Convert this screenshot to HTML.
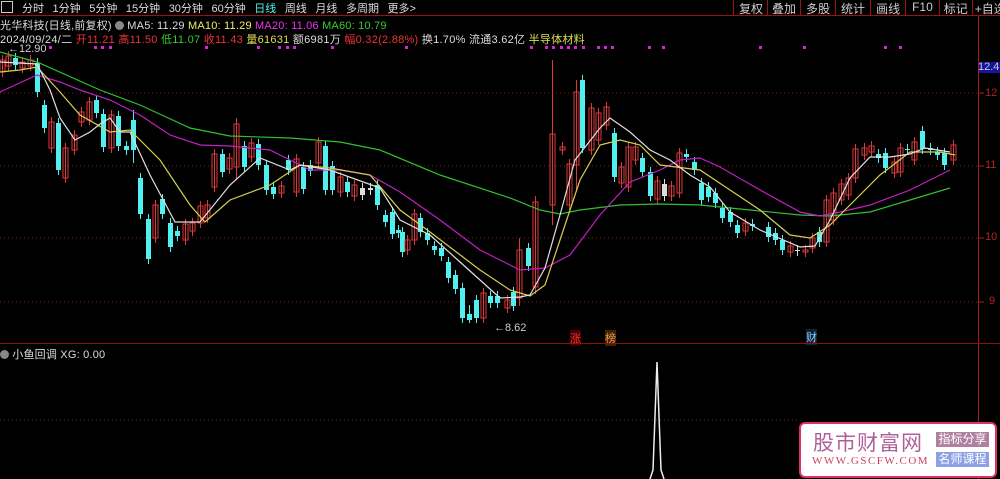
<!DOCTYPE html>
<html><head><meta charset="utf-8"><style>
body{margin:0;width:1000px;height:479px;background:#000;overflow:hidden;font-family:"Liberation Sans","Noto Sans CJK SC",sans-serif;position:relative}
.t{position:absolute;white-space:nowrap;font-size:11px}
</style></head><body>
<div class="t" style="left:0;top:0;width:1000px;height:15px;border-bottom:1px solid #a01010"></div>
<div class="t" style="left:1px;top:1px;width:10px;height:10px;border:1px solid #ccc;font-size:8px"></div>
<div class="t" style="left:22px;top:0px;color:#ddd;font-size:11px;word-spacing:5.5px">分时 1分钟 5分钟 15分钟 30分钟 60分钟 <span style="color:#5ee">日线</span> 周线 月线 多周期 更多&gt;</div>
<div class="t" style="left:733px;top:0;height:15px;width:267px;font-size:12px;color:#ccc;display:flex">
<span style="border-left:1px solid #a01010;padding:0 4px 0 5px">复权</span><span style="border-left:1px solid #a01010;padding:0 4px">叠加</span><span style="border-left:1px solid #a01010;padding:0 5px">多股</span><span style="border-left:1px solid #a01010;padding:0 5px">统计</span><span style="border-left:1px solid #a01010;padding:0 5px">画线</span><span style="border-left:1px solid #a01010;padding:0 6px">F10</span><span style="border-left:1px solid #a01010;padding:0 4px">标记</span><span style="border-left:1px solid #a01010;padding:0 2px">+自选</span></div>
<div class="t" style="left:0;top:17px;color:#ddd;font-size:11px;letter-spacing:0.2px">光华科技(日线,前复权) <span style="display:inline-block;width:9px;height:9px;border-radius:50%;background:#888;vertical-align:-1px"></span> MA5: 11.29 <span style="color:#ee6">MA10: 11.29</span> <span style="color:#e3e">MA20: 11.06</span> <span style="color:#3c3">MA60: 10.79</span></div>
<div class="t" style="left:0;top:31px;color:#ddd;font-size:11px;letter-spacing:0.27px">2024/09/24/二 <span style="color:#e33">开11.21 高11.50</span> <span style="color:#3c3">低11.07</span> <span style="color:#e33">收11.43</span> <span style="color:#dd5">量61631</span> 额6981万 <span style="color:#e33">幅0.32(2.88%)</span> 换1.70% 流通3.62亿 <span style="color:#dd5">半导体材料</span></div>
<div class="t" style="left:978px;top:62px;width:22px;height:11px;background:#1414a0;color:#ccc;font-size:11px;line-height:11px">12.4</div>
<div class="t" style="left:985px;top:87px;color:#b22;font-size:11px">12</div>
<div class="t" style="left:985px;top:159px;color:#b22;font-size:11px">11</div>
<div class="t" style="left:985px;top:231px;color:#b22;font-size:11px">10</div>
<div class="t" style="left:989px;top:295px;color:#b22;font-size:11px">9</div>
<div class="t" style="left:8px;top:43px;color:#ccc;font-size:11px">←12.90</div>
<div class="t" style="left:494px;top:322px;color:#ccc;font-size:11px">←8.62</div>
<div class="t" style="left:570px;top:330px;color:#e33;font-size:11px;background:#400">涨</div>
<div class="t" style="left:605px;top:330px;color:#e95;font-size:11px;background:#420">榜</div>
<div class="t" style="left:806px;top:329px;color:#8cf;font-size:11px;background:#123">财</div>
<div class="t" style="left:0;top:346px;color:#ddd;font-size:11px;letter-spacing:0.2px"><span style="display:inline-block;width:9px;height:9px;border-radius:50%;background:#888;vertical-align:-1px"></span> 小鱼回调 XG: 0.00</div>
<svg id="s" width="1000" height="479" style="position:absolute;left:0;top:0"></svg>
<div class="t" style="left:799px;top:422px;width:194px;height:52px;border:2px solid #e0306a;border-radius:6px;background:#fff"></div>
<div class="t" style="left:813px;top:427px;font-size:21px;color:#b06098;letter-spacing:1px">股市财富网</div>
<div class="t" style="left:812px;top:455px;font-size:11px;color:#d04060;font-family:'Liberation Serif',serif;letter-spacing:1.5px">WWW.GSCFW.COM</div>
<div class="t" style="left:936px;top:432px;width:53px;height:15px;background:#b080a0;color:#fff;font-size:12px;text-align:center;line-height:15px">指标分享</div>
<div class="t" style="left:936px;top:452px;width:53px;height:15px;background:#8ca0e6;color:#fff;font-size:12px;text-align:center;line-height:15px">名师课程</div>
<script>
var s='';
[93,166,238,302].forEach(function(y){s+='<line x1="0" y1="'+y+'" x2="978" y2="'+y+'" stroke="#802020" stroke-dasharray="1 3"/><line x1="978" y1="'+y+'" x2="984" y2="'+y+'" stroke="#a02020"/>'});
s+='<line x1="0" y1="420" x2="800" y2="420" stroke="#802020" stroke-dasharray="1 3"/>';
s+='<line x1="978.5" y1="16" x2="978.5" y2="479" stroke="#b01818"/><line x1="0" y1="343.5" x2="1000" y2="343.5" stroke="#901010"/>';
[50,95,102,110,206,258,279,287,294,332,406,531,546,553,561,568,575,583,598,605,612,649,663,760,804,885,900].forEach(function(x){s+='<rect x="'+(x-1)+'" y="46" width="3" height="3" fill="#e020e0"/>'});
var c=[[2,60,72,'r'],[8,56,66,'r'],[15,58,65,'c'],[22,62,68,'r'],[30,60,66,'r'],[37,63,92,'c'],[44,105,128,'c'],[51,122,148,'r'],[58,123,170,'c'],[65,148,178,'r'],[74,135,150,'r'],[81,112,122,'r'],[89,102,120,'r'],[96,100,113,'c'],[103,114,147,'c'],[111,115,148,'r'],[118,116,146,'c'],[126,146,150,'c'],[133,120,150,'c'],[140,178,214,'c'],[148,219,259,'c'],[155,205,238,'r'],[162,199,214,'c'],[170,223,247,'c'],[177,231,236,'c'],[185,224,240,'r'],[192,223,231,'r'],[200,206,223,'r'],[207,205,218,'r'],[214,154,187,'r'],[222,154,172,'c'],[229,158,169,'r'],[236,124,167,'r'],[244,146,167,'c'],[251,143,157,'r'],[258,144,165,'c'],[266,165,190,'c'],[273,187,194,'c'],[281,186,193,'r'],[288,160,170,'c'],[296,159,192,'r'],[303,167,189,'c'],[310,165,171,'c'],[318,142,163,'r'],[325,146,190,'c'],[332,166,190,'c'],[340,177,192,'r'],[347,182,192,'c'],[354,185,196,'r'],[362,188,195,'w'],[370,188,190,'w'],[377,185,205,'c'],[385,215,222,'c'],[392,212,234,'c'],[398,230,233,'c'],[402,232,252,'c'],[407,240,250,'r'],[414,214,240,'r'],[420,218,232,'c'],[427,233,240,'c'],[434,246,250,'c'],[441,248,256,'c'],[448,262,278,'c'],[455,275,289,'c'],[462,288,318,'c'],[469,314,320,'c'],[476,300,318,'c'],[483,293,318,'r'],[490,296,303,'c'],[497,296,303,'c'],[507,300,308,'r'],[513,292,306,'c'],[519,250,298,'r'],[528,248,266,'c'],[535,202,287,'r'],[552,134,205,'r'],[562,147,150,'r'],[569,164,205,'r'],[576,92,165,'r'],[582,80,148,'c'],[591,108,150,'r'],[598,113,140,'r'],[606,107,125,'r'],[614,133,177,'c'],[621,167,183,'r'],[628,147,187,'r'],[635,147,160,'r'],[642,158,172,'c'],[650,172,196,'c'],[657,181,199,'r'],[664,184,196,'w'],[671,186,196,'r'],[679,153,193,'r'],[686,154,157,'c'],[694,162,170,'c'],[701,183,200,'c'],[708,187,197,'c'],[715,193,203,'c'],[722,208,218,'c'],[730,212,222,'c'],[737,225,233,'c'],[745,223,231,'r'],[752,224,226,'c'],[768,227,237,'c'],[775,233,240,'c'],[782,240,250,'c'],[790,246,252,'r'],[797,250,251,'w'],[805,250,252,'r'],[812,238,248,'r'],[819,232,242,'c'],[826,200,242,'r'],[833,193,220,'r'],[841,184,200,'r'],[848,178,195,'r'],[855,149,178,'r'],[864,148,155,'r'],[871,146,152,'r'],[878,154,158,'c'],[885,153,168,'c'],[894,162,173,'r'],[900,148,172,'r'],[907,149,150,'c'],[914,142,160,'r'],[922,131,149,'c'],[930,148,150,'c'],[937,152,155,'c'],[944,153,165,'c'],[953,145,160,'r']];
var wk={552:[60,225],576:[80,190],535:[196,294],519:[238,306],236:[118,180],921:[128,160],469:[305,323],133:[110,163],600:[88,150]};
c.forEach(function(d){var x=d[0],t=d[1],b=d[2],k=d[3];var col=k=='r'?'#e0383a':(k=='c'?'#50f0f0':'#ddd');var w=wk[x]||[t-5,b+5];
s+='<line x1="'+(x+0.5)+'" y1="'+w[0]+'" x2="'+(x+0.5)+'" y2="'+w[1]+'" stroke="'+col+'"/>';
if(k=='r')s+='<rect x="'+(x-2)+'" y="'+t+'" width="5" height="'+Math.max(1,b-t)+'" fill="none" stroke="'+col+'"/>';
else s+='<rect x="'+(x-2)+'" y="'+t+'" width="5" height="'+Math.max(1,b-t)+'" fill="'+col+'"/>';});
function pl(p,col){s+='<polyline fill="none" stroke="'+col+'" stroke-width="1.2" points="'+p+'"/>'}
pl('0,52 37,62 100,90 140,105 190,128 230,136 290,138 340,142 380,150 440,175 510,198 540,210 560,214 580,210 620,205 660,204 700,205 750,210 800,215 830,216 870,212 910,200 950,188','#30c030');
pl('0,92 37,75 60,82 80,90 110,100 140,115 170,135 200,145 230,146 270,150 290,160 310,170 340,170 370,175 400,192 440,220 480,250 520,270 545,268 570,255 600,215 630,182 660,170 680,160 700,158 720,167 760,190 800,212 820,216 840,212 870,205 910,190 950,170','#c020c0');
pl('0,72 20,70 37,67 60,92 80,115 110,132 130,130 160,160 190,205 205,222 230,200 270,185 300,165 330,168 370,175 400,210 430,232 480,270 510,290 530,296 545,285 560,240 580,180 600,145 620,140 640,145 660,165 700,170 730,190 760,210 790,235 810,238 830,225 850,205 880,175 910,152 940,152 955,155','#d8d050');
pl('0,62 37,64 50,90 60,118 75,140 90,132 100,124 110,118 120,132 130,132 150,175 175,222 200,222 230,185 260,158 290,170 300,165 330,170 380,188 400,220 430,235 460,262 500,298 520,297 530,295 545,268 560,215 575,160 600,128 610,118 630,132 650,150 670,160 690,175 710,187 730,212 760,230 800,247 815,246 830,220 850,178 870,157 890,157 910,154 925,148 950,152','#e0e0e0');
s+='<polyline fill="none" stroke="#eee" stroke-width="1.5" points="650,479 653,470 657,362 661,470 664,479"/>';
document.getElementById('s').innerHTML=s;
</script>
</body></html>
